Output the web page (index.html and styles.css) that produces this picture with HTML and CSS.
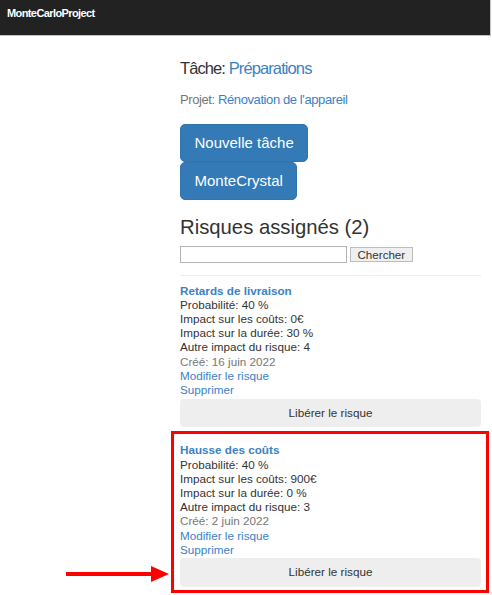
FILE: index.html
```html
<!DOCTYPE html>
<html lang="fr">
<head>
<meta charset="utf-8">
<title>MonteCarloProject</title>
<link rel="stylesheet" href="styles.css">
</head>
<body>
<nav class="navbar"><a class="brand" href="#">MonteCarloProject</a></nav>
<main class="content">
  <h4 class="task-title">Tâche: <a href="#">Préparations</a></h4>
  <p class="project">Projet: <a href="#">Rénovation de l'appareil</a></p>
  <div class="actions">
    <a class="btn-primary" href="#">Nouvelle tâche</a>
    <a class="btn-primary" href="#">MonteCrystal</a>
  </div>
  <h3 class="risks-title">Risques assignés (2)</h3>
  <form class="search">
    <input class="search-input" type="text">
    <button class="search-btn" type="button">Chercher</button>
  </form>
  <hr class="sep">
  <ul class="risk-list">
    <li class="risk">
      <a class="risk-name" href="#">Retards de livraison</a>
      <div>Probabilité: 40 %</div>
      <div>Impact sur les coûts: 0€</div>
      <div>Impact sur la durée: 30 %</div>
      <div>Autre impact du risque: 4</div>
      <div class="muted">Créé: 16 juin 2022</div>
      <a class="link" href="#">Modifier le risque</a>
      <a class="link" href="#">Supprimer</a>
      <button class="release" type="button">Libérer le risque</button>
    </li>
    <li class="risk highlighted">
      <a class="risk-name" href="#">Hausse des coûts</a>
      <div>Probabilité: 40 %</div>
      <div>Impact sur les coûts: 900€</div>
      <div>Impact sur la durée: 0 %</div>
      <div>Autre impact du risque: 3</div>
      <div class="muted">Créé: 2 juin 2022</div>
      <a class="link" href="#">Modifier le risque</a>
      <a class="link" href="#">Supprimer</a>
      <button class="release" type="button">Libérer le risque</button>
      <svg class="arrow" width="106" height="18" viewBox="0 0 106 18" aria-hidden="true">
        <rect x="1" y="7" width="88" height="4" fill="#ff0000"/>
        <polygon points="86,1 104,9 86,17" fill="#ff0000"/>
      </svg>
    </li>
  </ul>
</main>
</body>
</html>
```

FILE: styles.css
```css
* { box-sizing: border-box; }

html, body {
  margin: 0;
  padding: 0;
  background: #fff;
}

body {
  font-family: "Liberation Sans", Arial, Helvetica, sans-serif;
  color: #333;
  width: 492px;
  height: 595px;
  overflow: hidden;
}

a { text-decoration: none; color: #3b82c4; }

.navbar {
  width: 491px;
  height: 36px;
  background: #222;
  border-right: 1px solid #c4c4c4;
  border-bottom: 1px solid #c4c4c4;
  padding: 3px 0 0 7px;
}

.brand {
  color: #fff;
  font-weight: bold;
  font-size: 11px;
  line-height: 14px;
  letter-spacing: -0.6px;
}

.content {
  padding-left: 180px;
  width: 481px;
}

.task-title {
  margin: 22px 0 0;
  font-size: 16.5px;
  line-height: 20px;
  font-weight: normal;
  letter-spacing: -0.9px;
  color: #333;
}

.project {
  margin: 13.5px 0 0;
  font-size: 13px;
  line-height: 16px;
  letter-spacing: -0.4px;
  color: #777;
}

.actions {
  margin-top: 16px;
  display: flex;
  flex-direction: column;
  align-items: flex-start;
}

.btn-primary {
  display: block;
  background: #337ab7;
  border: 1px solid #3174ae;
  border-radius: 5px;
  color: #fff;
  font-size: 15px;
  line-height: 18px;
  padding: 9px 13.5px;
}

.risks-title {
  margin: 15px 0 0;
  font-size: 20.3px;
  line-height: 24px;
  font-weight: normal;
  color: #333;
}

.search {
  margin: 7px 0 0;
  display: flex;
  align-items: center;
  gap: 3px;
}

.search-input {
  width: 167px;
  height: 17px;
  margin: 0;
  border: 1px solid #b4b4b4;
  padding: 0 2px;
  font-size: 11.6px;
}

.search-btn {
  height: 15px;
  margin: 0;
  padding: 0 6.5px;
  border: 1px solid #bdbdbd;
  background: #efefef;
  font-family: "Liberation Sans", Arial, sans-serif;
  font-size: 11.6px;
  line-height: 13px;
  color: #333;
}

.sep {
  margin: 12.5px 0 0;
  border: 0;
  border-top: 1px solid #eee;
  height: 0;
}

.risk-list {
  list-style: none;
  margin: 0;
  padding: 0;
}

.risk {
  position: relative;
  padding: 7.5px 0 9px;
  font-size: 11.7px;
  line-height: 14.2px;
  color: #333;
}

.risk > a { display: block; }

.risk-name { font-weight: bold; }

.muted { color: #777; }

.release {
  display: block;
  width: 100%;
  margin: 1.5px 0 0;
  padding: 7px 0;
  border: 0;
  border-radius: 4px;
  background: #eee;
  font-family: "Liberation Sans", Arial, sans-serif;
  font-size: 11.7px;
  line-height: 14.2px;
  color: #333;
  text-align: center;
}

.highlighted::before {
  content: "";
  position: absolute;
  top: -5px;
  bottom: 3px;
  left: -9px;
  right: -8px;
  border: 3px solid #ff0000;
  pointer-events: none;
}

.arrow {
  position: absolute;
  left: -115px;
  top: 129px;
}
```
